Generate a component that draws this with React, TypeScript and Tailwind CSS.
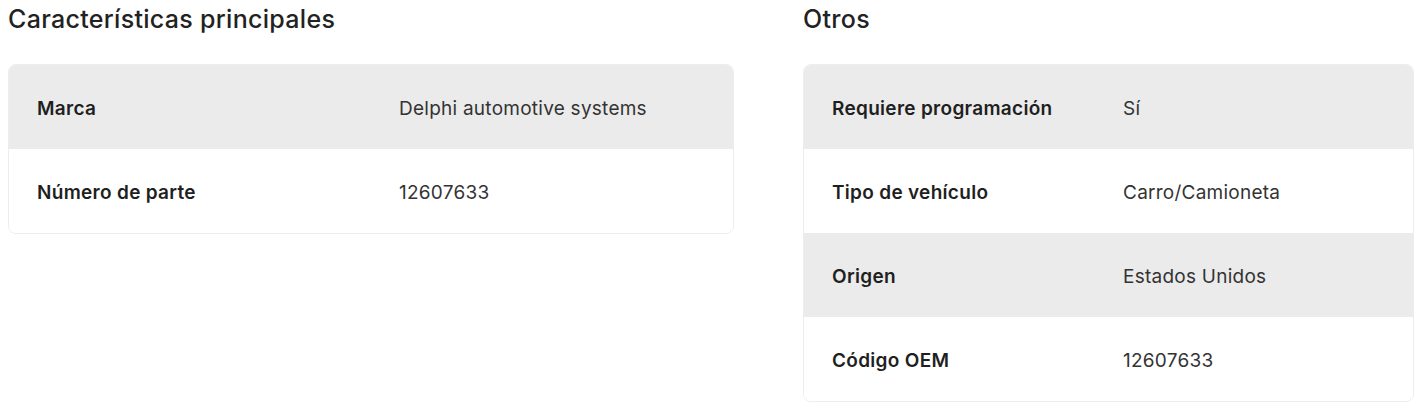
const principales = [
  { label: 'Marca', value: 'Delphi automotive systems' },
  { label: 'Número de parte', value: '12607633' },
];

const otros = [
  { label: 'Requiere programación', value: 'Sí' },
  { label: 'Tipo de vehículo', value: 'Carro/Camioneta' },
  { label: 'Origen', value: 'Estados Unidos' },
  { label: 'Código OEM', value: '12607633' },
];

type Row = { label: string; value: string };

const SpecTable = ({ rows, labelWidth }: { rows: Row[]; labelWidth: string }) => (
  <div className="rounded-lg border border-[#ededed] overflow-hidden">
    {rows.map((row, i) => (
      <div
        key={row.label}
        className={`flex items-center h-[84px] pl-[28px] pt-[4px] ${i % 2 === 0 ? 'bg-[#ebebeb]' : 'bg-white'}`}
      >
        <span className={`${labelWidth} shrink-0 text-[19px] tracking-[0.3px] font-semibold text-[#1f1f1f]`}>{row.label}</span>
        <span className="text-[19px] tracking-[0.25px] text-[#333333]">{row.value}</span>
      </div>
    ))}
  </div>
);

export default function App() {
  return (
    <div className="flex gap-[69px] pl-2 pt-[3px] bg-white min-h-[415px]" style={{ fontFamily: 'Inter, "Noto Sans", sans-serif' }}>
      <section className="w-[726px]">
        <h2 className="text-[25px] tracking-[0.3px] font-medium text-[#222222] h-[61px] leading-[32px]">Características principales</h2>
        <SpecTable rows={principales} labelWidth="w-[362px]" />
      </section>
      <section className="w-[611px]">
        <h2 className="text-[25px] tracking-[0.3px] font-medium text-[#222222] h-[61px] leading-[32px]">Otros</h2>
        <SpecTable rows={otros} labelWidth="w-[291px]" />
      </section>
    </div>
  );
}
